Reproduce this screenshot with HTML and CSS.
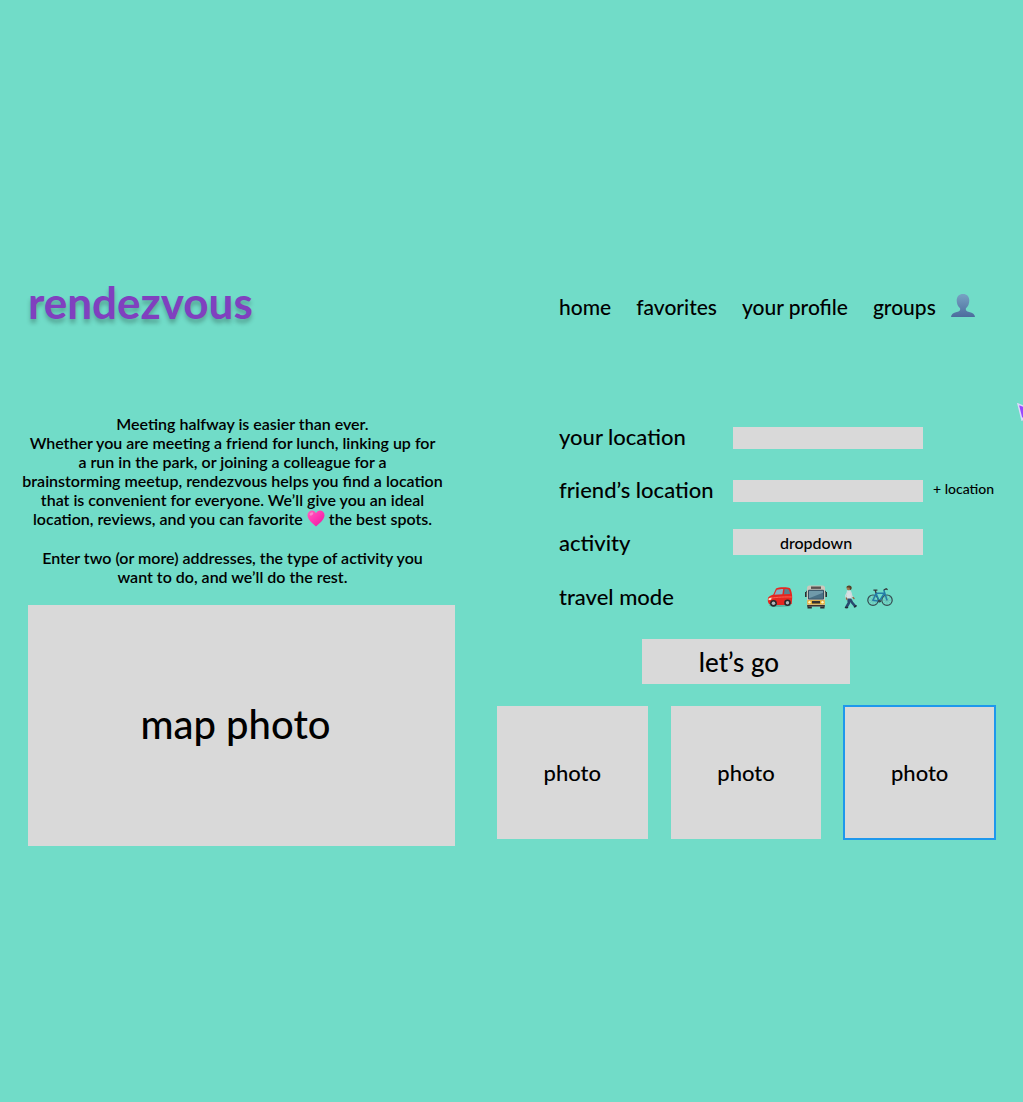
FILE: index.html
```html
<!DOCTYPE html>
<html lang="en">
<head>
<meta charset="utf-8">
<meta name="viewport" content="width=device-width, initial-scale=1">
<title>rendezvous</title>
<link rel="stylesheet" href="styles.css">
</head>
<body>
<div class="page">
  <header class="header">
    <h1 class="logo">rendezvous</h1>
    <nav class="nav">
      <a href="#">home</a>
      <a href="#">favorites</a>
      <a href="#">your profile</a>
      <a href="#">groups</a>
      <a class="avatar" href="#" aria-label="account">
        <svg width="24" height="24" viewBox="0 0 24 24">
          <defs><linearGradient id="bust" x1="0" y1="0" x2="0" y2="1"><stop offset="0" stop-color="#77a3c3"/><stop offset="1" stop-color="#4c6c9d"/></linearGradient></defs>
          <path fill="url(#bust)" d="M12 0c4 0 6.300 2.700 6.300 6.600 0 3.300-1.200 6-3.400 7.600-.4 2.300.6 3.200 3.300 3.800 3.600.8 5.600 2.300 5.800 5H0c.2-2.700 2.200-4.200 5.800-5 2.700-.6 3.700-1.500 3.300-3.800C6.900 12.600 5.700 9.900 5.700 6.600 5.700 2.700 8 0 12 0z"/>
        </svg>
      </a>
    </nav>
  </header>

  <main class="main">
    <section class="about">
      <div class="intro">
        <p><span class="lead">Meeting halfway is easier than ever.</span><br>
        Whether you are meeting a friend for lunch, linking up for<br>
        a run in the park, or joining a colleague for a<br>
        brainstorming meetup, rendezvous helps you find a location<br>
        that is convenient for everyone. We’ll give you an ideal<br>
        location, reviews, and you can favorite
        <svg class="heart" width="18" height="17" viewBox="0 0 18 17" role="img" aria-label="love"><defs><linearGradient id="pink" x1="0" y1="0" x2="1" y2="1"><stop offset="0" stop-color="#ff63bd"/><stop offset=".5" stop-color="#ff35b3"/><stop offset="1" stop-color="#e51b9b"/></linearGradient></defs><path fill="url(#pink)" d="M9 3.300C10 1.200 11.700.4 13.400.6 16 .9 17.700 3 17.500 5.600 17.200 9.900 12.500 13.600 9 16.500 5.500 13.600.8 9.900.5 5.600.3 3 2 .9 4.600.6 6.300.4 8 1.200 9 3.300z"/><ellipse cx="4.500" cy="3.900" rx="2" ry="1.300" fill="#ff9bd8" opacity=".7" transform="rotate(-35 4.500 3.900)"/></svg>
        the best spots.</p>
        <p>Enter two (or more) addresses, the type of activity you<br>
        want to do, and we’ll do the rest.</p>
      </div>
      <div class="map">map photo</div>
    </section>

    <section class="planner">
      <form class="form">
        <div class="row">
          <label for="yours">your location</label>
          <input class="field" id="yours" type="text">
        </div>
        <div class="row">
          <label for="friends">friend’s location</label>
          <input class="field" id="friends" type="text">
          <button class="add" type="button">+ location</button>
        </div>
        <div class="row">
          <label for="activity">activity</label>
          <select class="field dropdown" id="activity"><option>dropdown</option></select>
        </div>
        <div class="row">
          <span id="mode">travel mode</span>
          <div class="modes" role="group" aria-labelledby="mode">
            <button type="button" aria-label="car">
              <svg width="26" height="22" viewBox="0 0 26 22">
                <ellipse cx="13" cy="19.500" rx="11" ry="1.500" fill="#3c8b7d" opacity=".5"/>
                <path fill="#e52620" d="M9 2.500C11 1.200 20 .8 23 2.200c1.400 2 2.300 6.200 2.200 9.300l-.5 6.500c-3 1.200-17 1.500-21.500.6C.8 17.500.4 14 1.200 11.400 3 9.500 5 9 6.300 8.400z"/>
                <path fill="#7fb4c5" d="M9.800 3.800c2-.7 4.400-.9 6.400-.9l-.8 5.400-8 .5z"/><path fill="#56828f" d="M17.600 2.900c1.600 0 3 .1 4 .5.900 1.400 1.300 3 1.400 4.500l-6 .4z"/>
                <path d="M2 12.500c5-1 13-1.800 22.700-1.500" fill="none" stroke="#fa6354" stroke-width="1"/>
                <path fill="#fff0d0" d="M1.500 12.500l3-1-.3 2.200-2.700.6z"/>
                <g fill="#29292c"><circle cx="6.500" cy="17.300" r="3.400"/><circle cx="20.500" cy="16.800" r="3.300"/></g><g fill="#b3b7bc"><circle cx="6.500" cy="17.300" r="1.800"/><circle cx="20.500" cy="16.800" r="1.700"/></g>
              </svg>
            </button>
            <button type="button" aria-label="bus">
              <svg width="26" height="24" viewBox="-2 0 26 24">
                <path fill="#2c2d30" d="M2.500 19h4.300v4.500H2.500zM15.200 19h4.300v4.500h-4.300zM0 7h1.600v5H0zM20.400 7H22v5h-1.600z"/>
                <path d="M1 7.500L3 4.500M21 7.500l-2-3" stroke="#34383b"/>
                <rect x="2" y=".5" width="18" height="21" rx="2.500" fill="#ccc8bc"/>
                <rect x="6" y="1.500" width="10" height="2.400" fill="#5a5351"/><rect x="3" y="4.800" width="16" height="9.700" rx="1" fill="#354e60"/>
                <path fill="#709aaa" d="M4 5.800h14v7.500H4z"/><path fill="#4a7287" d="M4 13.300l14-5.500v5.500z"/>
                <path fill="#e4ad31" d="M2.300 15.200h17.400v4.300H2.300z"/><path fill="#343234" d="M7 16h8v2.500H7zM2.200 20h17.600v1.600H2.200z"/><g fill="#fff5c7"><circle cx="4.500" cy="17.300" r="1.200"/><circle cx="17.500" cy="17.300" r="1.200"/></g>
              </svg>
            </button>
            <button type="button" aria-label="walk">
              <svg width="18" height="24" viewBox="-3 0 18 24" fill="none" stroke-linecap="round" stroke-linejoin="round">
                <path d="M7.600 13.500l2.400 4 3 3.500M6.600 13.500L6.800 18 4.500 22" stroke="#29496f" stroke-width="2.600"/>
                <path d="M12.500 21.800l1.600-1M3.500 22.600h2" stroke="#222b36" stroke-width="1.500"/>
                <path fill="#d9dfe3" d="M4.800 5.500h4l.8 8H5z"/><path d="M5.700 7l-1.900 3.500.8 3.500M8.700 7l1 4 1.500 2" stroke="#cfdadd" stroke-width="1.500"/><path d="M4.400 13l.5 1.500M11 12.500l1 1" stroke="#93633d" stroke-width="1.300"/>
                <circle cx="6.800" cy="3" r="2.300" fill="#a3754e"/><path fill="#554027" d="M4.400 2.500C4.500-.2 9.600-.4 9.700 2.500c0 1.400-.5 2.200-1.500 2.500l-.8-2.400z"/>
              </svg>
            </button>
            <button type="button" aria-label="bike">
              <svg width="26" height="20" viewBox="0 0 26 20" fill="none">
                <g stroke="#34494e" stroke-width="1.200"><circle cx="6" cy="13.200" r="5.200"/><circle cx="20" cy="13.200" r="5.200"/></g>
                <g stroke="#62949a" stroke-width=".4"><path d="M6 8v10.400M.8 13.200h10.400M2.300 9.500l7.400 7.400M2.300 16.900l7.400-7.400M20 8v10.400M14.800 13.200h10.400M16.300 9.500l7.400 7.400M16.300 16.900l7.400-7.400"/></g>
                <path d="M6 13.200L9 6.200h8.300l-5 8zM9 6.200l3.300 8L6 13.200M20 13.200L16.800 3" stroke="#247da7" stroke-width="1.500"/>
                <path d="M9 6.200l-.7-2.700M6.400 3.200h4M16.700 3l2.500-1.200 1.400 1M11 14.300h3" stroke="#34383b" stroke-width="1.300"/><circle cx="12.300" cy="14.200" r="1.400" fill="#30494f"/>
              </svg>
            </button>
          </div>
        </div>
        <button class="go" type="submit">let’s go</button>
      </form>
      <div class="photos">
        <div class="photo">photo</div>
        <div class="photo">photo</div>
        <div class="photo selected">photo</div>
      </div>
    </section>
  </main>
  <svg class="cursor" width="6" height="18" viewBox="0 0 6 18" aria-hidden="true"><path d="M1 1l15 6-7 3-4 7z" fill="#9747ff" stroke="#ddd9fb" stroke-width="1.500"/></svg>
</div>
</body>
</html>
```
FILE: styles.css
```css
* { box-sizing: border-box; }
body {
  margin: 0;
  background: #71dcc8;
  color: #000;
  font-family: Lato, "Open Sans", sans-serif;
  font-size: 22px;
  font-weight: 500;
}
button, input, select {
  margin: 0;
  padding: 0;
  border: 0;
  border-radius: 0;
  background: none;
  color: inherit;
  font: inherit;
}
a { color: inherit; text-decoration: none; }
svg { display: block; }
p { margin: 0; }

.page {
  position: relative;
  min-height: 100vh;
  padding: 280px 28px 40px;
  overflow: hidden;
}
.header, .main {
  display: grid;
  grid-template-columns: minmax(0, 427fr) minmax(0, 498fr);
  column-gap: 42px;
}
.header { align-items: center; height: 52px; }
.logo {
  margin: 0;
  padding-bottom: 8px;
  color: #8040bf;
  font-size: 44px;
  font-weight: 700;
  line-height: 44px;
  text-shadow: 0 4px 4px rgba(0, 0, 0, .25);
}
.nav {
  display: flex;
  align-items: center;
  gap: 25px;
  padding-left: 62px;
  font-size: 21px;
  white-space: nowrap;
}
.avatar { margin-left: -10px; }

.main { padding-top: 82px; }
.intro {
  display: grid;
  gap: 20px;
  margin: 0 -8px 0 -16px;
  padding-right: 10px;
  font-size: 16px;
  font-weight: 600;
  line-height: 19px;
  text-align: center;
  white-space: nowrap;
}
.lead { padding-left: 20px; }
.heart { display: inline-block; vertical-align: -2px; }
.map {
  display: grid;
  place-items: center;
  height: 241px;
  margin-top: 19px;
  padding: 0 12px 4px 0;
  background: #d9d9d9;
  font-size: 40px;
}

.form {
  display: grid;
  gap: 24px;
  padding: 9px 0 0 62px;
}
.row {
  display: grid;
  grid-template-columns: 174px 190px 1fr;
  align-items: center;
  height: 29px;
  white-space: nowrap;
}
.row label { padding-bottom: 2px; }
.field { height: 22px; padding: 0 8px; background: #d9d9d9; }
.dropdown {
  align-self: start;
  appearance: none;
  height: 26px;
  padding-right: 32px;
  font-size: 16px;
  text-align-last: center;
}
.add { padding: 0 0 4px 10px; font-size: 14px; text-align: left; }
.modes { display: flex; align-items: center; gap: 10px; padding-left: 34px; }
.go {
  justify-self: center;
  width: 208px;
  height: 45px;
  margin: 4px 62px 0 0;
  padding-right: 14px;
  background: #d9d9d9;
  font-size: 26px;
}
.photos {
  display: grid;
  grid-template-columns: repeat(3, 1fr);
  gap: 23px;
  margin-top: 22px;
}
.photo {
  display: grid;
  place-items: center;
  height: 133px;
  background: #d9d9d9;
  font-size: 22px;
}
.selected { outline: 2px solid #1e98ec; outline-offset: -1px; }
.cursor { position: absolute; top: 403px; right: 0; }
```
